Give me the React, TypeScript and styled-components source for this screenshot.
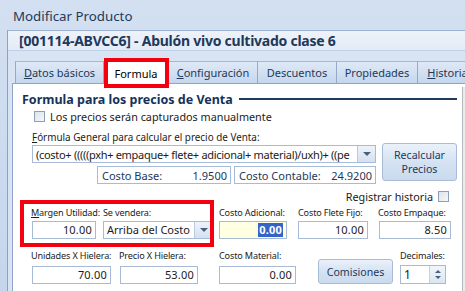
import React from "react"
import styled, { createGlobalStyle } from "styled-components"

const GlobalStyle = createGlobalStyle`
  body {
    margin: 0;
    font-family: "Noto Sans", "DejaVu Sans", sans-serif;
    font-size: 10px;
    color: #1b1b1b;
  }
`

const RED = "#f2000f"
const FIELD_BORDER = "#a7bbd7"
const NAVY = "#1e395b"

const Window = styled.div`
  width: 465px;
  height: 291px;
  overflow: hidden;
  display: flex;
  flex-direction: column;
  background: linear-gradient(#d3e0f1, #c5d6ec);
`

const TitleBar = styled.div`
  height: 30px;
  flex: none;
  display: flex;
  align-items: center;
  padding: 2px 0 0 13px;
  box-sizing: border-box;
  font-size: 13.3px;
  color: ${NAVY};
`

const Frame = styled.div`
  flex: 1;
  min-height: 0;
  margin-left: 7px;
  border-left: 1px solid #8aa2c5;
  border-top: 1px solid #9db3d1;
  background: #d8e4f3;
  display: flex;
  flex-direction: column;
`

const Heading = styled.div`
  height: 19px;
  flex: none;
  display: flex;
  align-items: center;
  padding-left: 11px;
  font-size: 14px;
  font-weight: 700;
  letter-spacing: -0.25px;
  color: ${NAVY};
  background: linear-gradient(#eef3fa, #e3ebf6);
  border-bottom: 1px solid #c0d0e6;
  white-space: nowrap;
`

const TabStrip = styled.div`
  flex: none;
  display: flex;
  padding: 10px 0 0 7px;
  position: relative;
  z-index: 2;
`

const Tab = styled.div<{ $w: number; $active?: boolean }>`
  width: ${(p) => p.$w}px;
  height: ${(p) => (p.$active ? "23px" : "22px")};
  margin-bottom: ${(p) => (p.$active ? "-1px" : "0")};
  flex: none;
  box-sizing: border-box;
  position: relative;
  display: flex;
  align-items: center;
  justify-content: center;
  white-space: nowrap;
  font-size: 11px;
  color: ${(p) => (p.$active ? "#000" : NAVY)};
  border-top: 1px solid #a3b8d6;
  border-right: 1px solid #93aacb;
  background: ${(p) =>
    p.$active ? "#fff" : "linear-gradient(#dfe9f6, #c5d7ed)"};
  &:first-child {
    border-left: 1px solid #93aacb;
  }
`

const TabMark = styled.div`
  position: absolute;
  top: -4px;
  left: 0;
  right: -1px;
  bottom: -4px;
  border: 4px solid ${RED};
  pointer-events: none;
`

const Page = styled.div`
  flex: 1;
  min-height: 0;
  margin-left: 4px;
  border-left: 1px solid #8ea5c7;
  border-top: 1px solid #8ea5c7;
  background: #fff;
  display: flex;
`

const Body = styled.div`
  flex: 1;
  display: flex;
  flex-direction: column;
`

const ScrollEdge = styled.div`
  width: 2px;
  margin-top: 3px;
  border-left: 1px solid #b5b9c0;
  background: #e9ebef;
`

const SectionTitle = styled.div`
  margin: 7px 0 0 9px;
  height: 16px;
  display: flex;
  align-items: center;
  font-size: 12.5px;
  font-weight: 700;
  color: #15325a;
  white-space: nowrap;
  &::after {
    content: "";
    flex: 1;
    height: 2px;
    margin: 0 5px 0 6px;
    background: #1f3a5c;
  }
`

const CheckRow = styled.label<{ $right?: boolean }>`
  display: flex;
  align-items: center;
  gap: 5px;
  height: 13px;
  font-size: 10.8px;
  white-space: nowrap;
  ${(p) =>
    p.$right
      ? "justify-content: flex-end; margin: 6px 13px 0 0;"
      : "margin: 3px 0 0 21px;"}
`

const Box = styled.span`
  width: 11px;
  height: 11px;
  flex: none;
  box-sizing: border-box;
  border: 1px solid #8e9fb5;
  background: linear-gradient(135deg, #dfe3e8, #f6f7f9);
`

const SmallLabel = styled.div`
  margin: 7px 0 0 19px;
  height: 15px;
  line-height: 15px;
  font-size: 9.9px;
  white-space: nowrap;
`

const FormulaBlock = styled.div`
  display: flex;
  margin-left: 19px;
`

const FormulaCol = styled.div`
  width: 344px;
  display: flex;
  flex-direction: column;
`

const Combo = styled.div<{ $w?: number }>`
  width: ${(p) => (p.$w ? `${p.$w}px` : "100%")};
  height: 18px;
  box-sizing: border-box;
  border: 1px solid ${FIELD_BORDER};
  display: flex;
  align-items: center;
  background: #fff;
  overflow: hidden;
`

const ComboText = styled.span<{ $size?: number }>`
  flex: 1;
  overflow: hidden;
  white-space: nowrap;
  padding-left: 3px;
  font-size: ${(p) => p.$size ?? 11}px;
  letter-spacing: ${(p) => (p.$size ? "0" : "-0.3px")};
`

const DropButton = styled.span`
  width: 17px;
  align-self: stretch;
  flex: none;
  border-left: 1px solid #b8c9e0;
  background: linear-gradient(#eef3fa, #d4e1f1);
  display: flex;
  align-items: center;
  justify-content: center;
  &::after {
    content: "";
    border-left: 4px solid transparent;
    border-right: 4px solid transparent;
    border-top: 4px solid #4b5f7a;
  }
`

const CostRow = styled.div`
  display: flex;
  justify-content: flex-end;
  gap: 3px;
  margin-top: 3px;
`

const CostBox = styled.div<{ $w: number }>`
  width: ${(p) => p.$w}px;
  height: 18px;
  box-sizing: border-box;
  border: 1px solid ${FIELD_BORDER};
  display: flex;
  justify-content: space-between;
  align-items: center;
  padding: 0 3px 0 4px;
  font-size: 11px;
  color: ${NAVY};
  white-space: nowrap;
`

const Button = styled.div<{ $w: number; $h: number }>`
  width: ${(p) => p.$w}px;
  height: ${(p) => p.$h}px;
  flex: none;
  box-sizing: border-box;
  border: 1px solid #a8bcd8;
  border-radius: 3px;
  background: linear-gradient(#eaf1fa, #d3e1f2 55%, #cbdbef);
  display: flex;
  flex-direction: column;
  align-items: center;
  justify-content: center;
  text-align: center;
  font-size: 10.6px;
  line-height: 14px;
  color: ${NAVY};
`

const RecalcButton = styled(Button)`
  margin: -2px 0 0 6px;
`

const FieldRow = styled.div<{ $cols: string; $top: number }>`
  position: relative;
  display: grid;
  grid-template-columns: ${(p) => p.$cols};
  align-items: end;
  margin: ${(p) => p.$top}px 0 0 18px;
`

const Field = styled.div<{ $gap: number }>`
  display: flex;
  flex-direction: column;
  gap: ${(p) => p.$gap}px;
  white-space: nowrap;
  font-size: 9.1px;
  letter-spacing: -0.15px;
  line-height: 14px;
`

const Input = styled.div<{ $w: number; $h?: number; $yellow?: boolean; $shift?: number }>`
  width: ${(p) => p.$w}px;
  height: ${(p) => p.$h ?? 18}px;
  margin-left: ${(p) => p.$shift ?? 0}px;
  box-sizing: border-box;
  border: 1px solid ${FIELD_BORDER};
  background: ${(p) => (p.$yellow ? "#ffffe1" : "#fff")};
  display: flex;
  align-items: center;
  justify-content: flex-end;
  padding-right: 3px;
  font-size: 11px;
  letter-spacing: 0.2px;
`

const Selected = styled.span`
  background: #3465c6;
  color: #fff;
  font-weight: 700;
  line-height: 14px;
  padding: 0 1px;
`

const GroupMark = styled.div`
  position: absolute;
  left: -11px;
  top: -6px;
  width: 194px;
  height: 47px;
  box-sizing: border-box;
  border: 4px solid ${RED};
  pointer-events: none;
`

const Spin = styled.div`
  width: 46px;
  height: 19px;
  box-sizing: border-box;
  border: 1px solid ${FIELD_BORDER};
  display: flex;
  font-size: 12px;
`

const SpinValue = styled.span`
  flex: 1;
  padding-left: 3px;
  display: flex;
  align-items: center;
`

const SpinArrows = styled.span`
  width: 15px;
  border-left: 1px solid #c3d2e6;
  background: linear-gradient(#f0f5fb, #dbe6f3);
  display: flex;
  flex-direction: column;
  align-items: center;
  justify-content: center;
  gap: 3px;
  &::before,
  &::after {
    content: "";
    border-left: 3px solid transparent;
    border-right: 3px solid transparent;
  }
  &::before {
    border-bottom: 3px solid #4b5f7a;
  }
  &::after {
    border-top: 3px solid #4b5f7a;
  }
`

const ComisionesButton = styled(Button)`
  align-self: end;
`

const tabs = [
  { key: "d", label: <><u>D</u>atos básicos</>, w: 89 },
  { key: "f", label: <>Formula</>, w: 65, active: true },
  { key: "c", label: <><u>C</u>onfiguración</>, w: 89 },
  { key: "de", label: <>Descuentos</>, w: 79 },
  { key: "p", label: <>Propiedades</>, w: 81 },
  { key: "h", label: <><u>H</u>istoria</>, w: 60 },
]

export default function App() {
  return (
    <>
      <GlobalStyle />
      <Window>
        <TitleBar>Modificar Producto</TitleBar>
        <Frame>
          <Heading>[001114-ABVCC6] - Abulón vivo cultivado clase 6</Heading>
          <TabStrip>
            {tabs.map((t) => (
              <Tab key={t.key} $w={t.w} $active={t.active}>
                {t.label}
                {t.active && <TabMark />}
              </Tab>
            ))}
          </TabStrip>
          <Page>
            <Body>
              <SectionTitle>Formula para los precios de Venta</SectionTitle>
              <CheckRow>
                <Box />
                Los precios serán capturados manualmente
              </CheckRow>
              <SmallLabel>
                <u>F</u>órmula General para calcular el precio de Venta:
              </SmallLabel>
              <FormulaBlock>
                <FormulaCol>
                  <Combo>
                    <ComboText>
                      (costo+ (((((pxh+ empaque+ flete+ adicional+ material)/uxh)+ ((pe
                    </ComboText>
                    <DropButton />
                  </Combo>
                  <CostRow>
                    <CostBox $w={134}>
                      <span>Costo Base:</span>
                      <span>1.9500</span>
                    </CostBox>
                    <CostBox $w={142}>
                      <span>Costo Contable:</span>
                      <span>24.9200</span>
                    </CostBox>
                  </CostRow>
                </FormulaCol>
                <RecalcButton $w={75} $h={38}>
                  <span>Recalcular</span>
                  <span>Precios</span>
                </RecalcButton>
              </FormulaBlock>
              <CheckRow $right>
                Registrar historia
                <Box />
              </CheckRow>
              <FieldRow $cols="72px 116px 79px 80px 1fr" $top={3}>
                <GroupMark />
                <Field $gap={1}>
                  <span>
                    <u>M</u>argen Utilidad:
                  </span>
                  <Input $w={64} $shift={1}>10.00</Input>
                </Field>
                <Field $gap={1}>
                  <span>Se vendera:</span>
                  <Combo $w={110}>
                    <ComboText $size={11}>Arriba del Costo</ComboText>
                    <DropButton />
                  </Combo>
                </Field>
                <Field $gap={1}>
                  <span>Costo Adicional:</span>
                  <Input $w={68} $yellow>
                    <Selected>0.00</Selected>
                  </Input>
                </Field>
                <Field $gap={1}>
                  <span>Costo Flete Fijo:</span>
                  <Input $w={70}>10.00</Input>
                </Field>
                <Field $gap={1}>
                  <span>Costo Empaque:</span>
                  <Input $w={72} $shift={1}>8.50</Input>
                </Field>
              </FieldRow>
              <FieldRow $cols="88px 100px 99px 82px 1fr" $top={10}>
                <Field $gap={3}>
                  <span>Unidades X Hielera:</span>
                  <Input $w={79} $shift={1}>70.00</Input>
                </Field>
                <Field $gap={3}>
                  <span>Precio X Hielera:</span>
                  <Input $w={78} $shift={1}>53.00</Input>
                </Field>
                <Field $gap={3}>
                  <span>Costo Material:</span>
                  <Input $w={77}>0.00</Input>
                </Field>
                <ComisionesButton $w={75} $h={25}>
                  Comisiones
                </ComisionesButton>
                <Field $gap={2}>
                  <span>Decimales:</span>
                  <Spin>
                    <SpinValue>1</SpinValue>
                    <SpinArrows />
                  </Spin>
                </Field>
              </FieldRow>
            </Body>
            <ScrollEdge />
          </Page>
        </Frame>
      </Window>
    </>
  )
}
